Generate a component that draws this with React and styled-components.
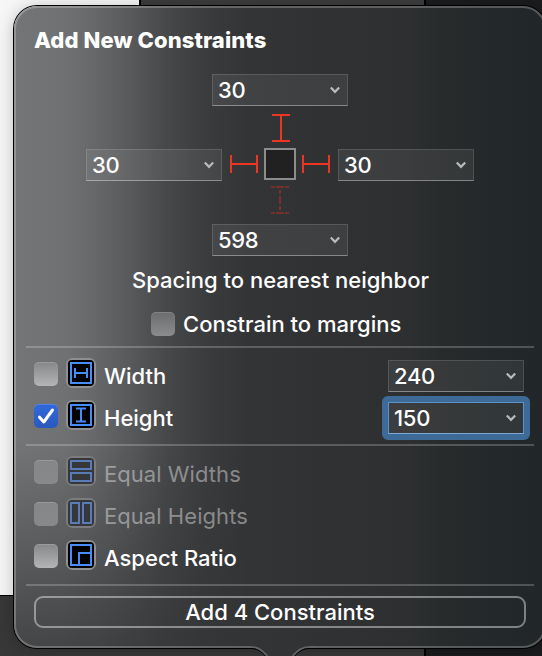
import React, { useState } from 'react'
import styled, { createGlobalStyle, css } from 'styled-components'

const GlobalStyle = createGlobalStyle`
  * {
    box-sizing: border-box;
  }
  body {
    margin: 0;
    overflow: hidden;
    background: #383838;
    color: #fff;
    font-family: Inter, "Liberation Sans", sans-serif;
    font-size: 22px;
    font-weight: 500;
  }
`;

const Window = styled.div`
  position: relative;
  display: flex;
  width: 542px;
  height: 656px;
  overflow: hidden;
`;

const Canvas = styled.div`
  width: 139px;
  height: 596px;
  background: #f7f7f7;
  border-bottom: 1px solid #000;
`;

const Editor = styled.div`
  width: 287px;
  background: #3c3c3c;
  border-left: 2px solid #000;
  border-right: 2px solid #000;
`;

const Inspector = styled.div`
  flex: 1;
  background: #1b1c1e;
`;

const Footer = styled.div`
  position: absolute;
  left: 0;
  bottom: 0;
  width: 424px;
  height: 60px;
  background: #383838;
`;

const Popover = styled.div`
  position: absolute;
  top: 6px;
  left: 14px;
  width: 532px;
  height: 642px;
  padding: 0 18px;
  border: 2px solid transparent;
  border-radius: 23px;
  background:
    linear-gradient(to bottom, rgba(50, 51, 53, 0) 68%, rgba(50, 51, 53, 0.72) 100%) 0 0 / 260px 100% no-repeat border-box,
    linear-gradient(to right, #747577 0, #707173 50px, #666769 82px, #58595b 116px, #474849 152px, #3b3c3e 190px, #333436 235px, #313234 290px, #2d2f30 390px, #282b2c 430px, #23282a 480px, #222628 100%) border-box;
  box-shadow: 0 0 0 1px #000, 0 2px 18px rgba(0, 0, 0, 0.25);

  &::after {
    content: '';
    position: absolute;
    inset: -2px;
    border: 2px solid rgba(255, 255, 255, 0.23);
    border-radius: 23px;
    pointer-events: none;
  }
`;

const Arrow = styled.svg`
  position: absolute;
  z-index: 1;
  left: 244px;
  top: 645px;
`;

const Title = styled.h1`
  margin: 18px 0 20px;
  height: 28px;
  line-height: 28px;
  font-size: 22px;
  font-weight: 800;
  letter-spacing: 0.1px;
`;

const Spacing = styled.div`
  display: flex;
  flex-direction: column;
  align-items: center;
`;

const SpacingRow = styled.div`
  display: flex;
  align-items: flex-end;
  height: 33px;
`;

const Box = styled.div`
  width: 32px;
  height: 32px;
  margin: 0 6px 1px;
  border: 2px solid #8c8c8c;
  background: #212121;
`;

const StrutSvg = styled.svg`
  display: block;
  flex: none;
  margin: ${(props) => props.$margin};
`;

const ComboBox = styled.div`
  position: relative;
  display: flex;
  align-items: center;
  justify-content: space-between;
  width: 136px;
  height: 32px;
  padding: 0 7px 0 5px;
  background: rgba(255, 255, 255, 0.07);
  border: 1px solid rgba(255, 255, 255, 0.13);
  border-bottom: 1px solid rgba(255, 255, 255, 0.38);
  line-height: 30px;
  font-weight: 550;
  letter-spacing: -0.3px;
  ${(props) =>
    props.$focused &&
    css`
      border-color: #5b93c9;
      border-bottom-color: #7fa9d1;

      /* focus ring */
      &::after {
        content: '';
        position: absolute;
        inset: -7px;
        border: 6px solid #3d6a96;
        border-radius: 6px;
      }
    `}
`;

const Caption = styled.div`
  margin-top: 10px;
  padding-left: 1px;
  height: 28px;
  line-height: 28px;
  text-align: center;
`;

const MarginsRow = styled.div`
  display: flex;
  align-items: center;
  gap: 8px;
  height: 24px;
  margin: 18px 0 10px 117px;
`;

const Check = styled.div`
  flex: none;
  width: 24px;
  height: 24px;
  border-radius: 5px;
  background: linear-gradient(to bottom, ${(props) => props.$from}, ${(props) => props.$to});
  box-shadow: inset 0 1px 0 rgba(255, 255, 255, 0.16);

  svg {
    display: block;
  }
`;

const Divider = styled.div`
  height: 2px;
  margin: 0 -8px;
  background: rgba(255, 255, 255, 0.21);
`;

const Group = styled.div`
  padding: 7px 0 5px;
`;

const Row = styled.div`
  display: flex;
  align-items: center;
  height: 42px;
  padding-right: 2px;

  ${Check} {
    margin-bottom: 4px;
  }
`;

const IconFrame = styled.svg`
  flex: none;
  margin: 0 8px 6px 8px;
`;

const Label = styled.span`
  flex: 1;
  white-space: nowrap;
  color: ${(props) => (props.$disabled ? 'rgba(255, 255, 255, 0.42)' : '#fff')};
  font-weight: ${(props) => (props.$disabled ? 400 : 500)};
  letter-spacing: ${(props) => (props.$disabled ? '0.05px' : '0')};
`;

const AddButton = styled.button`
  display: block;
  width: 492px;
  height: 32px;
  margin-top: 10px;
  padding: 0;
  border: 2px solid rgba(255, 255, 255, 0.42);
  border-radius: 9px;
  background: transparent;
  color: #fff;
  font: inherit;
  line-height: 28px;
`;

function Combo({ value, focused }) {
  return (
    <ComboBox $focused={focused}>
      {value}
      <svg width="10" height="8" viewBox="0 0 10 8" fill="none">
        <path d="M0.8 1.4L5 5.8L9.2 1.4" stroke="#b9babb" strokeWidth="2.2" />
      </svg>
    </ComboBox>
  );
}

function Checkbox({ checked, disabled, dim }) {
  let from = '#868789';
  let to = '#b4b5b7';
  if (dim) {
    from = '#6b6c6e';
    to = '#8b8c8e';
  }
  if (disabled) {
    from = '#858688';
    to = '#88898b';
  }
  if (checked) {
    from = '#3069de';
    to = '#2a58bd';
  }
  return (
    <Check $from={from} $to={to}>
      {checked && (
        <svg width="24" height="24" viewBox="0 0 24 24" fill="none">
          <path d="M5.5 13.2L9.8 18L18.5 6" stroke="#fff" strokeWidth="3" strokeLinecap="round" strokeLinejoin="round" />
        </svg>
      )}
    </Check>
  );
}

/* inner drawings, on the 30px icon grid */
const icons = {
  width: 'M9 10V20M21 10V20M9 15H21',
  height: 'M10 8.5H20M10 21.5H20M15 8.5V21.5',
  equalWidths: 'M5 5H25V13H5ZM5 17H25V25H5Z',
  equalHeights: 'M5 5H13V25H5ZM17 5H25V25H17Z',
  aspect: 'M13 25V13H25',
};

function ConstraintIcon({ type, disabled }) {
  const framed = type !== 'equalWidths' && type !== 'equalHeights';
  const color = disabled ? '#5b7bb6' : '#478df7';
  return (
    <IconFrame width="30" height="30" viewBox="0 0 30 30" fill="none">
      <rect width="30" height="30" rx="6.5" fill={disabled ? '#7b7c7e' : '#8e8f91'} />
      <rect x="2" y="2" width="26" height="26" rx="4" fill={disabled ? '#36373a' : '#000'} />
      {framed && <rect x="5" y="5" width="20" height="20" stroke={color} strokeWidth="2" />}
      <path d={icons[type]} stroke={color} strokeWidth="2" />
    </IconFrame>
  );
}

function ConstraintRow({ type, label, checked, disabled, value, focused }) {
  return (
    <Row>
      <Checkbox checked={checked} disabled={disabled} />
      <ConstraintIcon type={type} disabled={disabled} />
      <Label $disabled={disabled}>{label}</Label>
      {value && <Combo value={value} focused={focused} />}
    </Row>
  );
}

function App() {
  const [spacing] = useState({ top: '30', left: '30', right: '30', bottom: '598' });

  return (
    <Window>
      <GlobalStyle />
      <Canvas />
      <Editor />
      <Inspector />
      <Footer />
      <Popover>
        <Title>Add New Constraints</Title>
        <Spacing>
          <Combo value={spacing.top} />
          <StrutSvg $margin="8px 0 6px" width="20" height="28">
            <path d="M2 1H20M2 27H20M11 1V27" stroke="#ee3524" strokeWidth="2" />
          </StrutSvg>
          <SpacingRow>
            <Combo value={spacing.left} />
            <StrutSvg $margin="0 0 8px 8px" width="28" height="18">
              <path d="M1 0V18M27 0V18M1 9H27" stroke="#ee3524" strokeWidth="2" />
            </StrutSvg>
            <Box />
            <StrutSvg $margin="0 8px 8px 0" width="28" height="18">
              <path d="M1 0V18M27 0V18M1 9H27" stroke="#ee3524" strokeWidth="2" />
            </StrutSvg>
            <Combo value={spacing.right} />
          </SpacingRow>
          <StrutSvg $margin="5px 0 10px" width="20" height="28">
            <path
              d="M1 1H5M6.2 1H13.8M15 1H19M1 27H5M6.2 27H13.8M15 27H19M10 4V8M10 10V18M10 20V24"
              stroke="#77302c"
              strokeWidth="2"
            />
          </StrutSvg>
          <Combo value={spacing.bottom} />
        </Spacing>
        <Caption>Spacing to nearest neighbor</Caption>
        <MarginsRow>
          <Checkbox dim />
          <Label>Constrain to margins</Label>
        </MarginsRow>
        <Divider />
        <Group>
          <ConstraintRow type="width" label="Width" value="240" />
          <ConstraintRow type="height" label="Height" value="150" checked focused />
        </Group>
        <Divider />
        <Group>
          <ConstraintRow type="equalWidths" label="Equal Widths" disabled />
          <ConstraintRow type="equalHeights" label="Equal Heights" disabled />
          <ConstraintRow type="aspect" label="Aspect Ratio" />
        </Group>
        <Divider />
        <AddButton>Add 4 Constraints</AddButton>
      </Popover>
      <Arrow width="72" height="12" viewBox="0 0 72 12" fill="none">
        <path d="M4 0V2C14 2 18 5 24 12H48C54 5 58 2 68 2V0Z" fill="#323335" />
        <path d="M0 2H6C14 2 18 5 24 12M72 2H66C58 2 54 5 48 12" stroke="#626365" strokeWidth="2" />
        <path d="M0 3.5H6C13 3.5 17 6 22.4 12M72 3.5H66C59 3.5 55 6 49.6 12" stroke="#000" strokeWidth="1" />
      </Arrow>
    </Window>
  );
}

export default App;
